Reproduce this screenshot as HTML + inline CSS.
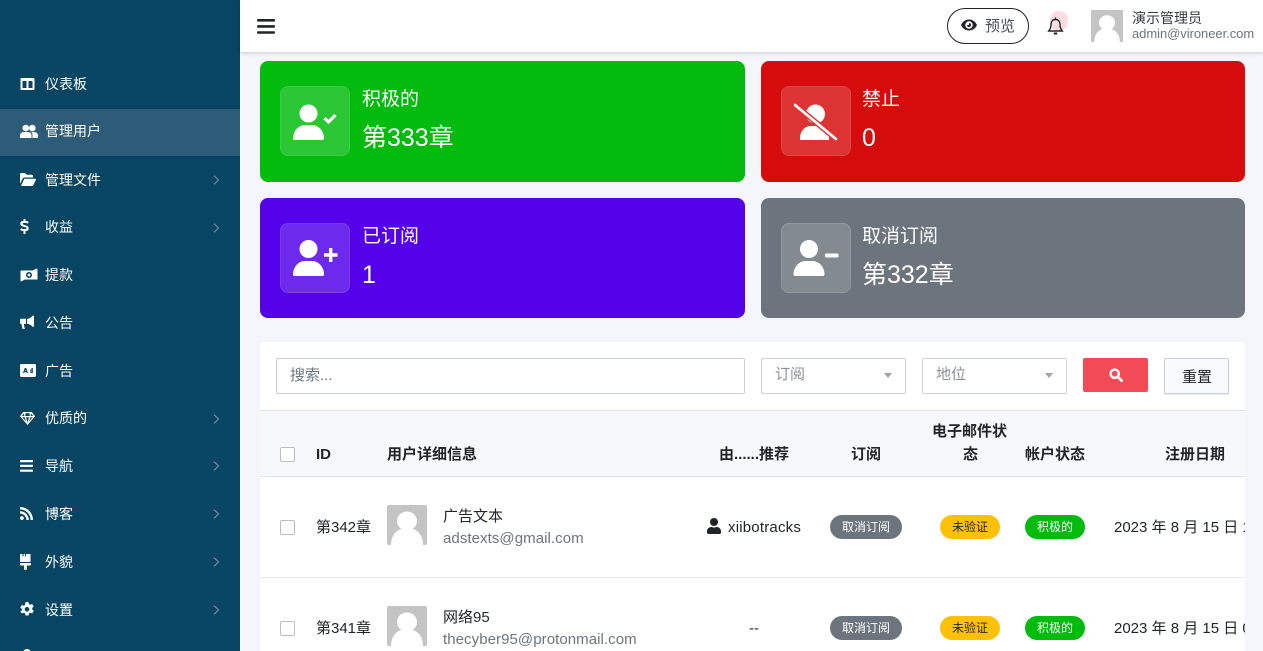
<!DOCTYPE html>
<html lang="zh"><head><meta charset="utf-8"><title>管理用户</title>
<style>
*{box-sizing:border-box}
html,body{margin:0;padding:0;width:1263px;height:651px;overflow:hidden;background:#f4f6fb;font-family:"Liberation Sans","Noto Sans CJK SC",sans-serif;color:#212529}
.t{position:absolute;white-space:nowrap;height:20px;line-height:20px}
.a{position:absolute}
svg{position:absolute;display:block}
#side{position:absolute;left:0;top:0;width:240px;height:651px;background:#074563;overflow:hidden}
#side .t{left:45px;color:#fff;font-size:14px}
#side svg{fill:#fff}
#side svg.c{left:213px;width:7px;height:10px;fill:none;stroke:#6f8ea1;stroke-width:1.4}
#top{position:absolute;left:240px;top:0;width:1023px;height:52px;background:#fff;box-shadow:0 1px 4px rgba(0,0,0,.18)}
.card{position:absolute;width:485px;border-radius:8px}
.box{position:absolute;left:20px;width:70px;height:70px;border-radius:8px;background:rgba(255,255,255,.16);border:1px solid rgba(255,255,255,.1)}
.card .t{left:102px;color:#fff}
.ct{font-size:19px}
.cv{font-size:25px}
.card svg{fill:#fff}
#panel{position:absolute;left:260px;top:342px;width:985px;height:309px;background:#fff;border-radius:4px 4px 0 0;overflow:hidden}
.inp{position:absolute;top:16px;height:36px;border:1px solid #ccd0da;border-radius:2px;background:#fff}
.ph{color:#8b9096;font-size:15px}
.car{position:absolute;top:16px;width:0;height:0;border-left:4.500px solid transparent;border-right:4.500px solid transparent;border-top:5px solid #a3a3a3}
.cb{position:absolute;left:20px;width:15px;height:15px;border:1px solid #bdbdbd;border-radius:2px;background:#fff}
.th{font-size:15px;font-weight:700;color:#212529}
.av{position:absolute;left:127px;width:40px;height:40px;border-radius:2px;background:#c4c4c4;overflow:hidden}
.td{font-size:15px;color:#212529}
.em{font-size:15px;color:#6c757d;letter-spacing:.07px}
.b{position:absolute;height:24px;line-height:24px;border-radius:12px;font-size:12px;text-align:center;white-space:nowrap}
.g{left:570px;width:72px;background:#6c757d;color:#fff}
.y{left:680px;width:60px;background:#ffc107;color:#212529}
.v{left:765px;width:60px;background:#03bb0c;color:#fff}
</style></head><body>

<div id="side">
<div class="a" style="left:0;top:109px;width:240px;height:47px;background:#2c5c77"></div>

<svg style="left:20px;top:77px" width="15" height="14" viewBox="0 0 15 14"><path fill-rule="evenodd" d="M1.500 1h12A1 1 0 0 1 14.500 2v10a1 1 0 0 1-1 1h-12a1 1 0 0 1-1-1V2a1 1 0 0 1 1-1zM2.500 4V11h4V4zM8.500 4V11h4V4z"/></svg>
<div class="t" style="top:74px">仪表板</div>

<svg style="left:20px;top:124px" width="18" height="15" viewBox="0 0 18 15"><circle cx="5.800" cy="4" r="3.300"/><circle cx="12.300" cy="4" r="3.300"/><path d="M0 14v-2.500C0 9.300 1.800 8 3.500 8h4.600C10 8 11.500 9.300 11.500 11.500V14H.5z"/><path d="M12.500 14v-3c0-1.300-.5-2.300-1.300-3H14c2 0 4 1.300 4 3.500V13a1 1 0 0 1-1 1z"/></svg>
<div class="t" style="top:121px">管理用户</div>

<svg style="left:20px;top:173px" width="16" height="13" viewBox="0 0 16 13"><path d="M0 1.500A1.500 1.500 0 0 1 1.500 0h3.500l1.700 1.700h4.800A1.500 1.500 0 0 1 13 3.200V4.500H4.500C3.500 4.500 3 5 2.600 5.700L.3 10.300H0z"/><path d="M4.300 5.700H15c.7 0 1.200.7.800 1.400l-2.500 5c-.3.500-.7.900-1.300.9H1z"/></svg>
<div class="t" style="top:170px">管理文件</div>
<svg class="c" style="top:175px" viewBox="0 0 8 12"><path d="M1 .8 6.500 6 1 11.200"/></svg>

<svg style="left:20px;top:219px" width="9" height="15" viewBox="0 0 9 15"><path d="M3.500 0h2v2h.5c1.400 0 2.300.6 2.800 1.300L7.400 4.600C7 4.200 6.500 4 5.800 4H3.300C2.600 4 2.400 5.200 3.100 5.500L6.800 6.700c2.800 1 2.500 5.100-.7 5.300h-.6v3h-2v-3H3C1.700 12 .7 11.400.1 10.600l1.400-1.300c.4.400.9.700 1.600.7h2.700c.8 0 1-1.200.2-1.500L2.100 7.300C-.6 6.300-.3 2.200 2.900 2h.6z"/></svg>
<div class="t" style="top:217px">收益</div>
<svg class="c" style="top:223px" viewBox="0 0 8 12"><path d="M1 .8 6.500 6 1 11.200"/></svg>

<svg style="left:20px;top:268px" width="18" height="14" viewBox="0 0 18 14"><path fill-rule="evenodd" d="M1 2.500 13 2.500 14.500 1.500 16.500.5 17.500 1V11.500L5 11.500 3 12.500 1 13.500 .5 13V3zM9 4a3 3 0 1 0 0 6 3 3 0 0 0 0-6z"/><circle cx="9" cy="7" r="1.400"/></svg>
<div class="t" style="top:265px">提款</div>

<svg style="left:20px;top:315px" width="15" height="15" viewBox="0 0 15 15"><path d="M13 .5c.6 0 1 .4 1 1V11c0 .6-.4 1-1 1-2-2-4-3-6-3.200V4C9 3.800 11 2.500 13 .5z"/><path d="M0 4.500C0 4 .5 3.800 1 3.800h5V9H3.800l1 5H2.500l-1-5H1C.4 9 0 8.500 0 8z"/></svg>
<div class="t" style="top:313px">公告</div>

<svg style="left:20px;top:364px" width="16" height="13" viewBox="0 0 16 13"><path fill-rule="evenodd" d="M1.500 0h13A1.500 1.500 0 0 1 16 1.500v10a1.500 1.500 0 0 1-1.500 1.500h-13A1.500 1.500 0 0 1 0 11.500v-10A1.500 1.500 0 0 1 1.500 0zM4.800 4 3 9h1.200l.3-.9h1.900l.3.9H8L6.200 4zM5.500 5.600 6 7.100H5zM11.500 4v1.500H11A2 2 0 0 0 11 9h1.800V4zM11.500 6.500V8H11.200a.75.750 0 0 1 0-1.500z"/></svg>
<div class="t" style="top:361px">广告</div>

<svg style="left:20px;top:412px" width="15" height="13" viewBox="0 0 15 13"><path fill-rule="evenodd" d="M3.200 0h8.600L15 4.200 7.500 13 0 4.200zM3.900 1.400 2 4h2.300zM5.500 1.300 5.200 4h4.600l-.3-2.700zM11.100 1.400 10.700 4H13zM2.300 5.300 6 9.500 4.600 5.300zM6 5.300 7.500 10.500 9 5.300zM10.400 5.300 9 9.500 12.700 5.300z"/></svg>
<div class="t" style="top:408px">优质的</div>
<svg class="c" style="top:414px" viewBox="0 0 8 12"><path d="M1 .8 6.500 6 1 11.200"/></svg>

<svg style="left:20px;top:460px" width="13" height="12" viewBox="0 0 13 12"><rect y="0" width="13" height="2.200" rx=".5"/><rect y="4.800" width="13" height="2.200" rx=".5"/><rect y="9.600" width="13" height="2.200" rx=".5"/></svg>
<div class="t" style="top:456px">导航</div>
<svg class="c" style="top:461px" viewBox="0 0 8 12"><path d="M1 .8 6.500 6 1 11.200"/></svg>

<svg style="left:20px;top:507px" width="13" height="13" viewBox="0 0 13 13"><circle cx="1.900" cy="11.100" r="1.900"/><path d="M0 4.200v2.400a6.400 6.400 0 0 1 6.400 6.400h2.400A8.800 8.800 0 0 0 0 4.200z"/><path d="M0 0v2.400A10.600 10.600 0 0 1 10.600 13H13A13 13 0 0 0 0 0z"/></svg>
<div class="t" style="top:504px">博客</div>
<svg class="c" style="top:509px" viewBox="0 0 8 12"><path d="M1 .8 6.500 6 1 11.200"/></svg>

<svg style="left:20px;top:554px" width="11" height="16" viewBox="0 0 11 16"><path d="M1 0h1.500v2.500h1V0h1.500v2.500h1V0h4.500v8H0V1a1 1 0 0 1 1-1z"/><path d="M0 9h11v1.500c0 .7-.5 1-1 1H7v3a1.500 1.500 0 0 1-3 0v-3H1c-.5 0-1-.3-1-1z"/></svg>
<div class="t" style="top:552px">外貌</div>
<svg class="c" style="top:557px" viewBox="0 0 8 12"><path d="M1 .8 6.500 6 1 11.200"/></svg>

<svg style="left:20px;top:602px" width="14" height="15" viewBox="0 0 14 15"><path fill-rule="evenodd" d="M5.500 0h3l.4 2 1.300.7 2-.7 1.500 2.600-1.500 1.300v1.600l1.500 1.300-1.500 2.600-2-.7-1.300.8-.4 2h-3l-.4-2-1.300-.8-2 .7L.3 9.800l1.500-1.300V6.900L.3 5.600 1.800 3l2 .7L5.100 2.900zM7 5a2.300 2.300 0 1 0 0 4.600A2.300 2.300 0 0 0 7 5z"/></svg>
<div class="t" style="top:600px">设置</div>
<svg class="c" style="top:605px" viewBox="0 0 8 12"><path d="M1 .8 6.500 6 1 11.200"/></svg>

<div class="a" style="left:23px;top:649px;width:8px;height:8px;border-radius:50%;background:#fff"></div>
</div>

<div id="top">
<svg style="left:17px;top:19px" width="18" height="15" viewBox="0 0 18 15" fill="#212529"><rect width="18" height="2.600" rx="1"/><rect y="6.100" width="18" height="2.600" rx="1"/><rect y="12.200" width="18" height="2.600" rx="1"/></svg>
<div class="a" style="left:707px;top:8px;width:82px;height:36px;border:1px solid #222;border-radius:18px;background:#fff"></div>
<svg style="left:721px;top:19px" width="16" height="12" viewBox="0 0 16 12" fill="#212529"><path fill-rule="evenodd" d="M8 .5c3.500 0 6.500 2.200 8 5.500-1.500 3.500-4.500 5.500-8 5.500S1.500 9.500 0 6C1.500 2.700 4.500 .5 8 .5zM8 2.300a3.700 3.700 0 1 0 0 7.400 3.700 3.700 0 0 0 0-7.400z"/><path d="M8 4a2 2 0 1 1-2 2c.4.200 1.400.2 1.800-.2.400-.4.400-1.200.2-1.800z"/></svg>
<div class="t" style="left:745px;top:17px;font-size:15px;color:#495057">预览</div>
<div class="a" style="left:810px;top:11px;width:18px;height:20px;border-radius:9px;background:#fddcdf"></div>
<svg style="left:807px;top:17px" width="17" height="19" viewBox="0 0 17 19" fill="none" stroke="#212529" stroke-width="1.400"><path d="M8.500 2.500c-2.800 0-4.500 2-4.500 4.800 0 3.500-.8 5-2.200 6.700h13.400c-1.400-1.700-2.200-3.200-2.200-6.700 0-2.800-1.700-4.800-4.500-4.800z"/><path d="M8.500 .5v2"/><path d="M6.800 16.500h3.400" stroke-width="2"/></svg>
<div class="a" style="left:851px;top:10px;width:32px;height:32px;background:#c4c4c4;overflow:hidden;border-radius:1px">
<svg style="left:0;top:0" width="32" height="32" viewBox="0 0 40 40" fill="#fff"><ellipse cx="20" cy="16" rx="10" ry="9.500"/><path d="M4 40c0-11 7-17 16-17s16 6 16 17z"/></svg></div>
<div class="t" style="left:892px;top:8px;font-size:14px;color:#343a40">演示管理员</div>
<div class="t" style="left:892px;top:24px;font-size:13px;color:#6c757d;letter-spacing:-.05px">admin@vironeer.com</div>
</div>

<div class="card" style="left:260px;top:61px;height:121px;background:#03bb0c">
<div class="box" style="top:25px"></div>
<svg style="left:33px;top:43px" width="46" height="38" viewBox="0 0 46 38"><circle cx="15.500" cy="9.500" r="9"/><path d="M0 34.500c0-8 6-13.500 12-13.500h7c6 0 12 5.500 12 13.500 0 1-.8 1.500-1.500 1.500h-28C.7 36 0 35.500 0 34.500z"/><path d="M31.500 14l4 4 7-7" fill="none" stroke="#fff" stroke-width="3.200"/></svg>
<div class="t ct" style="top:29px;left:102px">积极的</div>
<div class="t cv" style="top:67px;left:102px">第333章</div>
</div>

<div class="card" style="left:761px;top:61px;height:121px;width:484px;background:#d60c0c">
<div class="box" style="top:25px"></div>
<svg style="left:32px;top:42px" width="46" height="38" viewBox="0 0 46 38"><circle cx="22.500" cy="11" r="9.500"/><path d="M7 37v-2c0-7 5-12 11-12h7c6 0 11 5 11 12v2z"/><path d="M2 2 43 36" stroke="#de3838" stroke-width="5.500"/><path d="M2 2 43 36" stroke="#fff" stroke-width="2.600" stroke-linecap="round"/></svg>
<div class="t ct" style="top:29px;left:101px">禁止</div>
<div class="t cv" style="top:67px;left:101px">0</div>
</div>

<div class="card" style="left:260px;top:198px;height:120px;background:#5302e9">
<div class="box" style="top:25px"></div>
<svg style="left:33px;top:42px" width="46" height="38" viewBox="0 0 46 38"><circle cx="15.500" cy="9" r="9"/><path d="M0 34.500c0-8 6-13.500 12-13.500h7c6 0 12 5.500 12 13.500 0 1-.8 1.500-1.500 1.500h-28C.7 36 0 35.500 0 34.500z"/><path d="M36 8h3.400v5.300H44.500v3.400H39.400V22H36v-5.300H31v-3.400H36z"/></svg>
<div class="t ct" style="top:29px">已订阅</div>
<div class="t cv" style="top:67px">1</div>
</div>

<div class="card" style="left:761px;top:198px;height:120px;width:484px;background:#6c757d">
<div class="box" style="top:25px"></div>
<svg style="left:32px;top:42px" width="46" height="38" viewBox="0 0 46 38"><circle cx="16" cy="9" r="9"/><path d="M.5 34.500c0-8 6-13.500 12-13.500h7c6 0 12 5.500 12 13.500 0 1-.8 1.500-1.500 1.500H2C1.200 36 .5 35.500 .5 34.500z"/><rect x="32" y="13.500" width="13.500" height="4" rx="1.200"/></svg>
<div class="t ct" style="top:29px;left:101px">取消订阅</div>
<div class="t cv" style="top:67px;left:101px">第332章</div>
</div>

<div id="panel">
<div class="inp" style="left:16px;width:469px"></div>
<div class="t ph" style="left:30px;top:24px;color:#6c757d">搜索...</div>
<div class="inp" style="left:501px;width:145px"></div>
<div class="t ph" style="left:515px;top:23px">订阅</div>
<div class="car" style="left:624px;top:31px"></div>
<div class="inp" style="left:662px;width:145px"></div>
<div class="t ph" style="left:676px;top:23px">地位</div>
<div class="car" style="left:785px;top:31px"></div>
<div class="a" style="left:823px;top:16px;width:65px;height:34px;background:#f24b55;border-radius:2px"></div>
<svg style="left:849px;top:26px" width="14" height="14" viewBox="0 0 16 16" fill="none" stroke="#fff"><circle cx="6.500" cy="6.500" r="4.700" stroke-width="2.800"/><path d="M10 10l4.500 4.500" stroke-width="3" stroke-linecap="round"/></svg>
<div class="a" style="left:904px;top:16px;width:65px;height:36px;background:#f8f9fb;border:1px solid #c6d0da;border-radius:2px;box-shadow:0 1px 1px rgba(0,0,0,.08)"></div>
<div class="t" style="left:922px;top:26px;font-size:15px;color:#212529">重置</div>

<div class="a" style="left:0;top:68px;width:985px;height:67px;background:#f6f8fb;border-top:1px solid #e3e6ec;border-bottom:1px solid #e3e6ea"></div>
<div class="cb" style="top:105px"></div>
<div class="t th" style="left:56px;top:103px">ID</div>
<div class="t th" style="left:127px;top:103px">用户详细信息</div>
<div class="t th" style="left:459px;top:103px">由......推荐</div>
<div class="t th" style="left:591px;top:103px">订阅</div>
<div class="t th" style="left:672px;top:80px">电子邮件状</div>
<div class="t th" style="left:703px;top:103px">态</div>
<div class="t th" style="left:765px;top:103px">帐户状态</div>
<div class="t th" style="left:905px;top:103px">注册日期</div>

<div class="cb" style="top:178px"></div>
<div class="t td" style="left:56px;top:176px">第342章</div>
<div class="av" style="top:163px"><svg style="left:0;top:0" width="40" height="40" viewBox="0 0 40 40" fill="#fff"><ellipse cx="20" cy="16" rx="10" ry="9.500"/><path d="M4 40c0-11 7-17 16-17s16 6 16 17z"/></svg></div>
<div class="t td" style="left:183px;top:165px">广告文本</div>
<div class="t em" style="left:183px;top:187px">adstexts@gmail.com</div>
<svg style="left:447px;top:176px" width="14" height="16" viewBox="0 0 448 512" fill="#212529"><path d="M224 256c70.700 0 128-57.300 128-128S294.700 0 224 0 96 57.300 96 128s57.300 128 128 128zm89.600 32h-16.700c-22.200 10.200-46.900 16-72.900 16s-50.600-5.800-72.900-16h-16.700C60.200 288 0 348.200 0 422.400V464c0 26.500 21.500 48 48 48h352c26.500 0 48-21.500 48-48v-41.600c0-74.200-60.200-134.400-134.400-134.400z"/></svg>
<div class="t td" style="left:468px;top:176px;letter-spacing:.2px">xiibotracks</div>
<div class="b g" style="top:173px">取消订阅</div>
<div class="b y" style="top:173px">未验证</div>
<div class="b v" style="top:173px">积极的</div>
<div class="t td" style="left:854px;top:176px">2023 年 8 月 15 日 10:25</div>
<div class="a" style="left:0;top:235px;width:985px;height:1px;background:#e6e8ea"></div>

<div class="cb" style="top:279px"></div>
<div class="t td" style="left:56px;top:277px">第341章</div>
<div class="av" style="top:264px"><svg style="left:0;top:0" width="40" height="40" viewBox="0 0 40 40" fill="#fff"><ellipse cx="20" cy="16" rx="10" ry="9.500"/><path d="M4 40c0-11 7-17 16-17s16 6 16 17z"/></svg></div>
<div class="t td" style="left:183px;top:266px">网络95</div>
<div class="t em" style="left:183px;top:288px">thecyber95@protonmail.com</div>
<div class="t td" style="left:489px;top:277px">--</div>
<div class="b g" style="top:274px">取消订阅</div>
<div class="b y" style="top:274px">未验证</div>
<div class="b v" style="top:274px">积极的</div>
<div class="t td" style="left:854px;top:277px">2023 年 8 月 15 日 09:12</div>
</div>
</body></html>
